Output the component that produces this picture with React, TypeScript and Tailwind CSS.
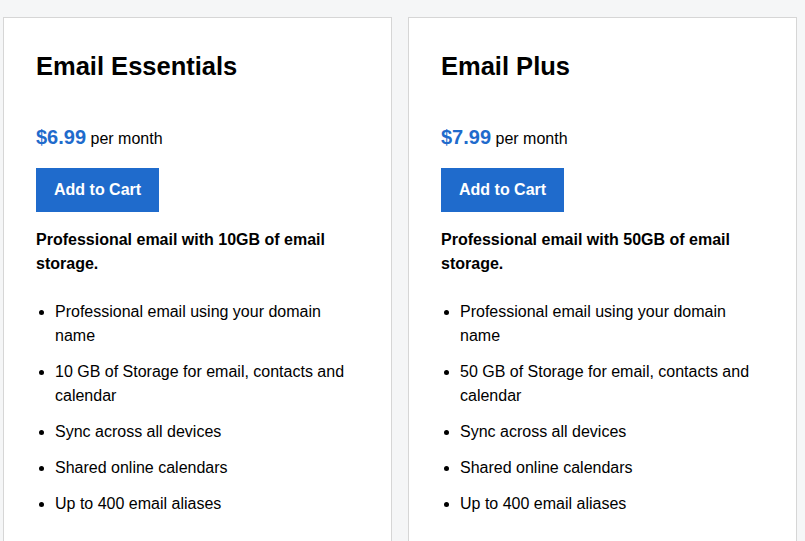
import React from "react";

const Plans = [
  {
    name: "Email Essentials",
    price: "$6.99",
    blurb: "Professional email with 10GB of email storage.",
    features: [
      "Professional email using your domain name",
      "10 GB of Storage for email, contacts and calendar",
      "Sync across all devices",
      "Shared online calendars",
      "Up to 400 email aliases",
    ],
  },
  {
    name: "Email Plus",
    price: "$7.99",
    blurb: "Professional email with 50GB of email storage.",
    features: [
      "Professional email using your domain name",
      "50 GB of Storage for email, contacts and calendar",
      "Sync across all devices",
      "Shared online calendars",
      "Up to 400 email aliases",
    ],
  },
];

export default function App() {
  return (
    <div className="min-h-[541px] bg-[#f5f6f7] pt-[17px] pl-[3px] font-['Liberation_Sans',Arial,sans-serif] text-black">
      <div className="flex gap-4">
        {Plans.map((plan, index) => {
          return (
            <div
              key={index}
              className="w-[389px] h-[560px] bg-white border border-[#d6d6d6] px-8 pt-[30px]"
            >
              <h2 className="text-[25.5px] leading-[36px] font-bold">{plan.name}</h2>
              <p className="mt-[41px] text-base leading-[24px]">
                <span className="text-[20px] font-bold text-[#1f6bcc]">{plan.price}</span> per month
              </p>
              <button className="mt-[17px] h-[44px] px-[18px] bg-[#1f6bcc] text-white font-bold text-base">
                Add to Cart
              </button>
              <p className="mt-[16px] font-bold text-base leading-[24px]">{plan.blurb}</p>
              <ul className="mt-[24px] flex flex-col gap-3 list-disc pl-[19px] text-base leading-[24px]">
                {plan.features.map((f, i) => (
                  <li key={i}>{f}</li>
                ))}
              </ul>
            </div>
          );
        })}
      </div>
    </div>
  );
}
